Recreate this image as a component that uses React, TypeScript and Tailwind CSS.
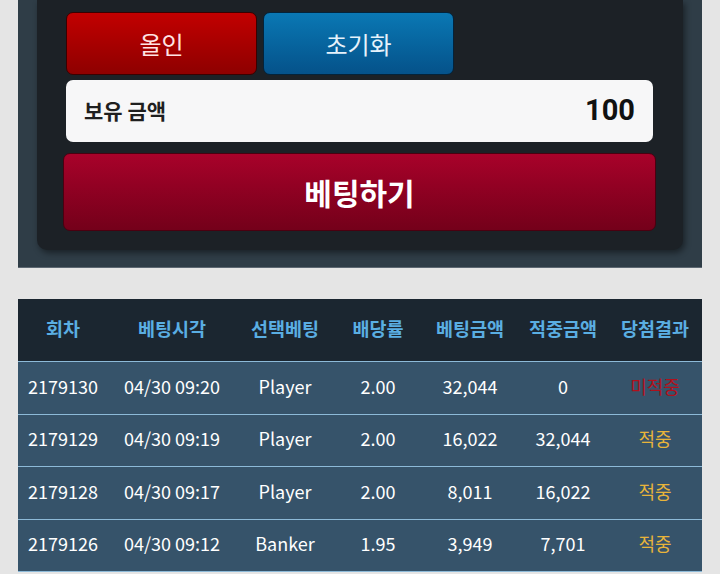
import React from "react"

const FONT = { fontFamily: '"Noto Sans CJK KR", "Noto Sans", sans-serif' }

type Row = {
  round: string
  time: string
  pick: string
  odds: string
  bet: string
  win: string
  result: "hit" | "miss"
}

const rows: Row[] = [
  { round: "2179130", time: "04/30 09:20", pick: "Player", odds: "2.00", bet: "32,044", win: "0", result: "miss" },
  { round: "2179129", time: "04/30 09:19", pick: "Player", odds: "2.00", bet: "16,022", win: "32,044", result: "hit" },
  { round: "2179128", time: "04/30 09:17", pick: "Player", odds: "2.00", bet: "8,011", win: "16,022", result: "hit" },
  { round: "2179126", time: "04/30 09:12", pick: "Banker", odds: "1.95", bet: "3,949", win: "7,701", result: "hit" },
]

const cols = ["회차", "베팅시각", "선택베팅", "배당률", "베팅금액", "적중금액", "당첨결과"]
const widths = ["w-[90px]", "w-[128px]", "w-[98px]", "w-[88px]", "w-[96px]", "w-[90px]", "w-[94px]"]

function BetPanel() {
  return (
    <div className="mx-[18px] h-[268px] bg-[#2f3d47] border-b border-[#5d6872] px-[19px]">
      <div className="h-[250px] rounded-b-[10px] bg-[#1c2126] shadow-[2px_3px_6px_rgba(0,0,0,0.45)] pl-[29px] pr-[30px] pt-[12px]">
        <div className="flex gap-[6px]">
          <button className="w-[191px] h-[63px] rounded-[7px] border border-[#3a0000] bg-gradient-to-b from-[#c20000] to-[#8e0000] text-[#ffe4e4] text-[24px]">
            올인
          </button>
          <button className="w-[191px] h-[63px] rounded-[7px] border border-[#04233a] bg-gradient-to-b from-[#0a78b4] to-[#05528a] text-[#e6f2fb] text-[24px]">
            초기화
          </button>
        </div>
        <div className="mt-[5px] h-[62px] rounded-[7px] bg-[#f7f7f8] flex items-center justify-between pl-[18px] pr-[18px]">
          <span className="text-[21px] font-bold text-[#1f1f1f]">보유 금액</span>
          <span className="text-[29px] font-bold text-[#111]" style={{ fontFamily: "Roboto, sans-serif" }}>100</span>
        </div>
        <button className="mt-[11px] -mx-[3px] w-[593px] h-[78px] rounded-[7px] border border-[#4a0010] bg-gradient-to-b from-[#a8022a] to-[#74001a] text-white text-[30px] font-bold">
          베팅하기
        </button>
      </div>
    </div>
  )
}

function HistoryTable() {
  return (
    <div className="mx-[18px] mt-[31px]">
      <div className="flex h-[63px] pb-[3px] bg-[#1b2630] border-b border-[#8dbad8] items-center">
        {cols.map((c, i) => (
          <div key={c} className={`${widths[i]} text-center text-[18.5px] font-bold text-[#5aaee2] whitespace-nowrap`}>
            {c}
          </div>
        ))}
      </div>
      {rows.map((r) => {
        const cells = [r.round, r.time, r.pick, r.odds, r.bet, r.win]
        return (
          <div key={r.round} className="flex h-[52.5px] pb-[3px] bg-[#36536a] border-b border-[#8dbad8] items-center text-white text-[18px]">
            {cells.map((v, i) => (
              <div key={i} className={`${widths[i]} text-center whitespace-nowrap`}>
                {v}
              </div>
            ))}
            <div className="w-[94px] text-center">
              {r.result === "miss" ? (
                <span className="text-[#b0101c]">미적중</span>
              ) : (
                <span className="text-[#e8b43a]">적중</span>
              )}
            </div>
          </div>
        )
      })}
    </div>
  )
}

export default function App() {
  return (
    <div className="w-[720px] h-[574px] overflow-hidden bg-[#e5e5e5]" style={FONT}>
      <BetPanel />
      <HistoryTable />
    </div>
  )
}
